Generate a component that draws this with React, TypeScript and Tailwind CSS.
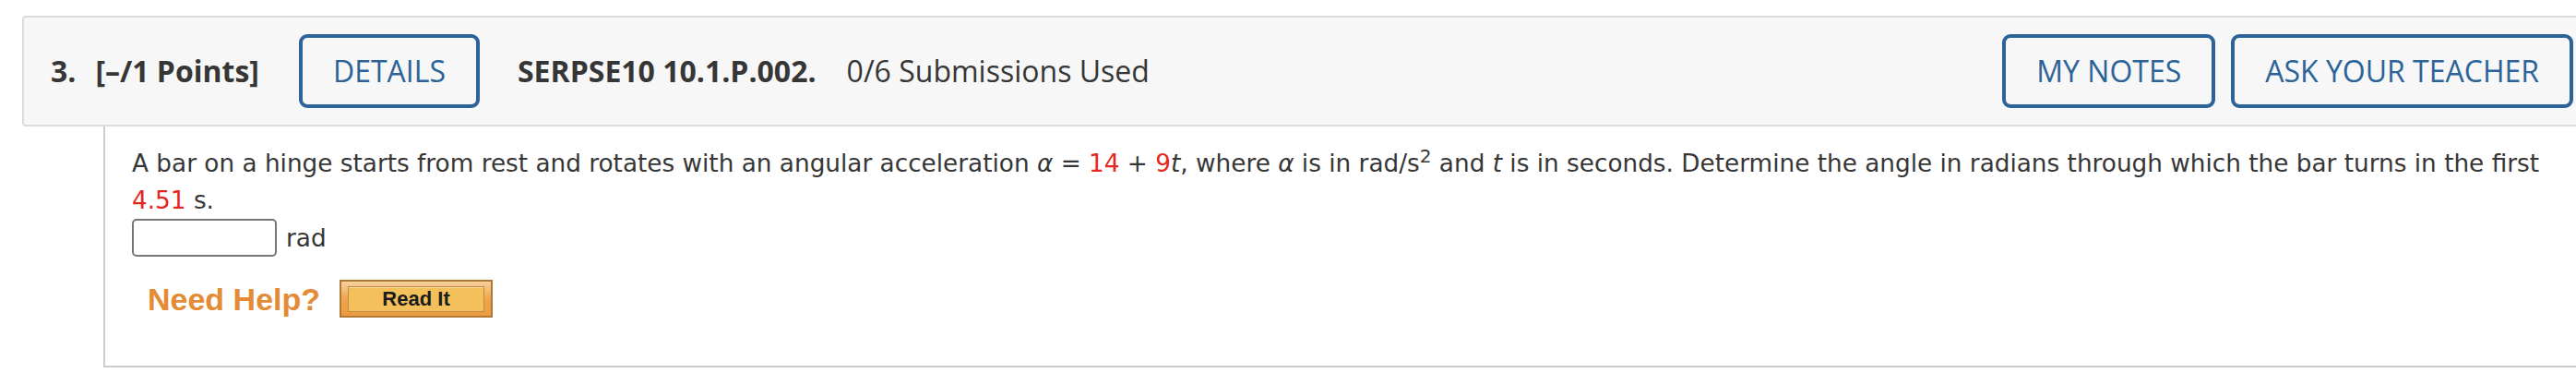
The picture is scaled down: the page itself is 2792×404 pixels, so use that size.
import React from 'react'

const HeaderButton = ({ label }: { label: string }) => (
  <div className="h-[80px] flex items-center px-[33px] border-[4px] border-[#2c6399] rounded-[9px] text-[#2c6399] text-[32px] font-medium leading-none whitespace-nowrap">
    {label}
  </div>
)

export default function App() {
  return (
    <div className="w-[2792px] h-[404px] overflow-hidden bg-white text-[#363636]">
      {/* Question header */}
      <div className="pt-[17px] pl-[24px]">
        <div className="w-[2800px] h-[120px] flex items-center bg-[#f7f7f7] border-2 border-[#dcdcdc] rounded-[4px] pl-[29px] pr-[33px] font-['Open_Sans',sans-serif] whitespace-nowrap">
          <span className="text-[32px] font-bold">3.</span>
          <span className="text-[32px] font-bold ml-[21px]">[–/1 Points]</span>
          <div className="ml-[43px]">
            <HeaderButton label="DETAILS" />
          </div>
          <span className="text-[32px] font-bold ml-[41px]">SERPSE10 10.1.P.002.</span>
          <span className="text-[32px] ml-[33px]">0/6 Submissions Used</span>
          <div className="ml-auto flex gap-[17px]">
            <HeaderButton label="MY NOTES" />
            <HeaderButton label="ASK YOUR TEACHER" />
          </div>
        </div>
      </div>

      {/* Question body */}
      <div className="ml-[112px] w-[2760px] border-l-2 border-b-2 border-[#cccccc] pl-[29px] pt-[20px] pb-[52px] font-['DejaVu_Sans',Verdana,sans-serif]">
        <p className="w-[2640px] text-[26.3px] leading-[40px]">
          A bar on a hinge starts from rest and rotates with an angular acceleration <i>α</i> ={' '}
          <span className="text-[#e5261f]">14</span> + <span className="text-[#e5261f]">9</span>
          <i>t</i>, where <i>α</i> is in rad/s<sup className="text-[20px]">2</sup> and <i>t</i> is in
          seconds. Determine the angle in radians through which the bar turns in the first{' '}
          <span className="text-[#e5261f]">4.51</span> s.
        </p>
        <div className="flex items-center">
          <input
            type="text"
            className="w-[157px] h-[41px] border-2 border-[#767676] rounded-[5px] bg-white outline-none"
          />
          <span className="ml-[10px] text-[26.3px] leading-[40px]">rad</span>
        </div>
        <div className="mt-[25px] ml-[17px] flex items-center gap-[21px]">
          <span className="font-['Liberation_Sans',Arial,sans-serif] font-bold text-[34px] leading-none text-[#e38b35]">
            Need Help?
          </span>
          <div className="w-[166px] h-[41px] border-2 border-[#b17936] bg-linear-to-b from-[#f7d09c] via-[#efa54b] to-[#ec9c40] px-[7px] pt-[5px] pb-[4px]">
            <div className="h-full flex items-center justify-center border border-[#c08a48] bg-[#f3c05b] shadow-[inset_0_1px_0_#f8dc9c] font-['Liberation_Sans',Arial,sans-serif] font-bold text-[22px] leading-none text-[#1c1c1c]">
              Read It
            </div>
          </div>
        </div>
      </div>
    </div>
  )
}
